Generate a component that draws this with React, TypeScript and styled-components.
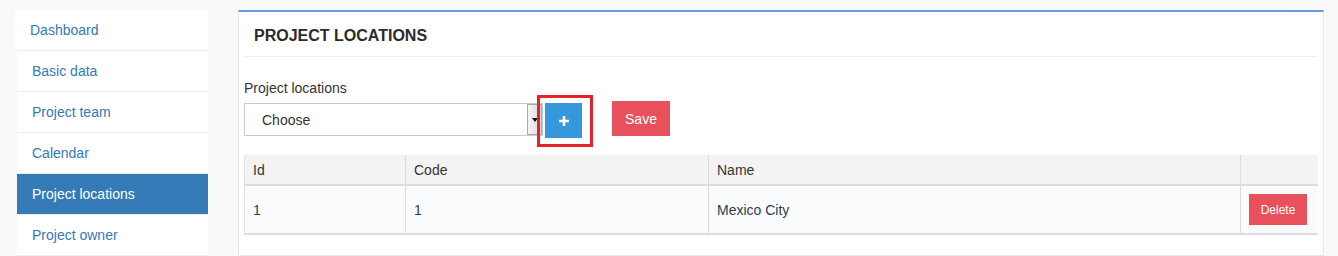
import styled, { createGlobalStyle } from "styled-components";

const GlobalStyle = createGlobalStyle`
	body {
		margin: 0;
		background: #f9f9f9;
		font-family: "Liberation Sans", Arial, sans-serif;
		font-size: 14px;
		color: #333;
	}
`;

const linkBlue = "#337ab7";
const danger = "#e8505b";

const Page = styled.div`
	display: flex;
	align-items: flex-start;
	gap: 30px;
	padding: 10px 0 0 15px;
	height: 246px;
	overflow: hidden;
`;

const Sidebar = styled.ul`
	list-style: none;
	margin: 0;
	padding: 0;
	width: 193px;
	flex-shrink: 0;
`;

const NavItem = styled.li<{ active?: boolean; first?: boolean }>`
	height: 40px;
	line-height: 40px;
	margin-left: ${(p) => (p.first ? "0" : "2px")};
	padding-left: 15px;
	background: ${(p) => (p.active ? linkBlue : "#fff")};
	color: ${(p) => (p.active ? "#fff" : linkBlue)};
	border-bottom: 1px solid #eeeeee;
	font-size: 14px;
`;

const Panel = styled.section`
	width: 1086px;
	height: 246px;
	background: #fff;
	border: 1px solid #e7eaec;
	border-top: 2px solid #659be0;
	box-sizing: border-box;
	flex-shrink: 0;
`;

const PanelHeader = styled.div`
	margin: 0 5px;
	height: 44px;
	padding-left: 10px;
	display: flex;
	align-items: center;
	border-bottom: 1px solid #eceef1;
`;

const Title = styled.h3`
	margin: 0;
	padding-top: 3px;
	font-size: 16px;
	font-weight: bold;
	color: #2b2b2b;
`;

const PanelBody = styled.div`
	padding: 0 5px;
`;

const Label = styled.label`
	display: block;
	margin-top: 21px;
	line-height: 20px;
	color: #333;
`;

const FormRow = styled.div`
	display: flex;
	align-items: flex-start;
	margin-top: 5px;
`;

const Select = styled.div`
	width: 299px;
	height: 33px;
	box-sizing: border-box;
	border: 1px solid #c6ccd3;
	display: flex;
	align-items: stretch;
`;

const SelectText = styled.span`
	flex: 1;
	padding-left: 17px;
	line-height: 33px;
	font-size: 14px;
	color: #333;
`;

const SelectArrow = styled.span`
	width: 15px;
	box-sizing: border-box;
	border: 1px solid #a9a9a9;
	background: linear-gradient(to right, #f4f4f4, #dcdcdc);
	position: relative;

	&::after {
		content: "";
		position: absolute;
		left: 4px;
		top: 13px;
		border-left: 3px solid transparent;
		border-right: 3px solid transparent;
		border-top: 4px solid #111;
	}
`;

const AddWrap = styled.div`
	position: relative;
	margin-left: 2px;
`;

const Highlight = styled.div`
	position: absolute;
	left: -8px;
	top: -8px;
	width: 56px;
	height: 52px;
	border: 3px solid #e8202a;
	box-sizing: border-box;
	pointer-events: none;
`;

const Button = styled.button<{ tone: "primary" | "danger"; small?: boolean }>`
	border: none;
	margin: 0;
	padding: 0;
	cursor: pointer;
	font-family: "Liberation Sans", Arial, sans-serif;
	color: #fff;
	background: ${(p) => (p.tone === "primary" ? "#3598dc" : danger)};
	font-size: ${(p) => (p.small ? "12px" : "14px")};
`;

const AddButton = styled(Button)`
	width: 37px;
	height: 35px;
	display: flex;
	align-items: center;
	justify-content: center;
`;

const SaveButton = styled(Button)`
	width: 58px;
	height: 35px;
	margin-left: 30px;
	margin-top: -2px;
`;

const DeleteButton = styled(Button)`
	width: 58px;
	height: 31px;
	display: block;
`;

const Table = styled.table`
	margin-top: 17px;
	width: 1074px;
	border-collapse: collapse;
	table-layout: fixed;
	border-left: 1px solid #e4e4e4;
`;

const Th = styled.th<{ w?: number }>`
	box-sizing: border-box;
	width: ${(p) => (p.w ? `${p.w}px` : "auto")};
	height: 30px;
	padding: 0 8px;
	text-align: left;
	font-weight: normal;
	background: #f3f3f3;
	border-right: 1px solid #dddddd;
	border-bottom: 2px solid #dddddd;
	color: #333;

	&:last-child {
		border-right: none;
	}
`;

const Td = styled.td`
	box-sizing: border-box;
	height: 49px;
	padding: 0 8px;
	background: #fafbfc;
	border-right: 1px solid #dddddd;
	border-bottom: 2px solid #dddddd;
	color: #2f3e4e;

	&:last-child {
		border-right: none;
	}
`;

const PlusIcon = () => (
	<svg width="10" height="10" viewBox="0 0 10 10">
		<path d="M5 0v10M0 5h10" stroke="#fff" strokeWidth="2.6" />
	</svg>
);

const navItems = [
	"Dashboard",
	"Basic data",
	"Project team",
	"Calendar",
	"Project locations",
	"Project owner",
];

const rows = [{ id: 1, code: "1", name: "Mexico City" }];

const App = () => {
	return (
		<>
			<GlobalStyle />
			<Page>
				<Sidebar>
					{navItems.map((item, i) => (
						<NavItem
							key={item}
							first={i === 0}
							active={item === "Project locations"}
						>
							{item}
						</NavItem>
					))}
				</Sidebar>
				<Panel>
					<PanelHeader>
						<Title>PROJECT LOCATIONS</Title>
					</PanelHeader>
					<PanelBody>
						<Label>Project locations</Label>
						<FormRow>
							<Select>
								<SelectText>Choose</SelectText>
								<SelectArrow />
							</Select>
							<AddWrap>
								<AddButton tone="primary">
									<PlusIcon />
								</AddButton>
								<Highlight />
							</AddWrap>
							<SaveButton tone="danger">Save</SaveButton>
						</FormRow>
						<Table>
							<thead>
								<tr>
									<Th w={161}>Id</Th>
									<Th w={303}>Code</Th>
									<Th w={532}>Name</Th>
									<Th />
								</tr>
							</thead>
							<tbody>
								{rows.map((r) => (
									<tr key={r.id}>
										<Td>{r.id}</Td>
										<Td>{r.code}</Td>
										<Td>{r.name}</Td>
										<Td>
											<DeleteButton tone="danger" small>
												Delete
											</DeleteButton>
										</Td>
									</tr>
								))}
							</tbody>
						</Table>
					</PanelBody>
				</Panel>
			</Page>
		</>
	);
};

export default App;
